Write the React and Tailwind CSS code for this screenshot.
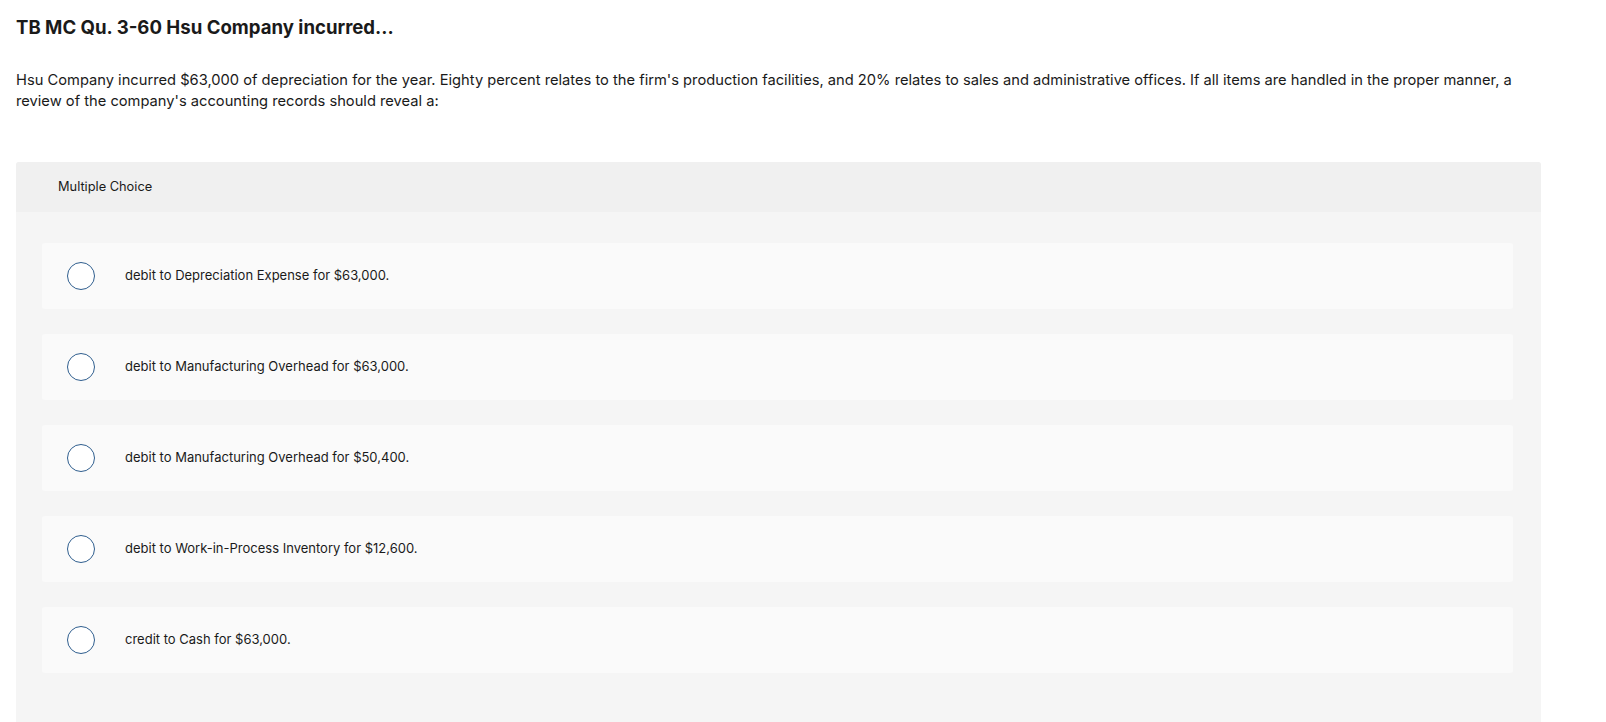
import React from "react";

const options = [
  "debit to Depreciation Expense for $63,000.",
  "debit to Manufacturing Overhead for $63,000.",
  "debit to Manufacturing Overhead for $50,400.",
  "debit to Work-in-Process Inventory for $12,600.",
  "credit to Cash for $63,000.",
];

const App = () => {
  return (
    <div className="min-h-screen bg-white text-[#1a1a1a] font-['Inter','Liberation_Sans',sans-serif] px-4 pt-[16px]">
      {/* Title */}
      <h1 className="text-[18.6px] leading-[22px] font-bold">TB MC Qu. 3-60 Hsu Company incurred...</h1>

      {/* Question */}
      <p className="mt-[32px] w-[1525px] text-[14.7px] leading-[21px]">
        Hsu Company incurred $63,000 of depreciation for the year. Eighty percent relates to the firm's production facilities, and 20% relates to sales and administrative offices. If all items are handled in the proper manner, a review of the company's accounting records should reveal a:
      </p>

      {/* Answer panel */}
      <div className="mt-[50px] w-[1525px] rounded-t-[3px] bg-[#f5f5f5] pb-[50px]">
        <div className="h-[50px] flex items-center px-[42px] bg-[#f0f0f0] rounded-t-[3px] text-[12.8px]">
          Multiple Choice
        </div>
        <div className="flex flex-col gap-[25px] pt-[31px] pl-[26px] pr-[28px]">
          {options.map((opt) => (
            <div key={opt} className="h-[66px] flex items-center bg-[#fafafa] rounded-[3px] pl-[25px]">
              <span className="w-[28px] h-[28px] rounded-full border-[1.5px] border-[#2f5e8e] bg-white shrink-0" />
              <span className="ml-[30px] text-[13px]">{opt}</span>
            </div>
          ))}
        </div>
      </div>
    </div>
  );
};

export default App;
